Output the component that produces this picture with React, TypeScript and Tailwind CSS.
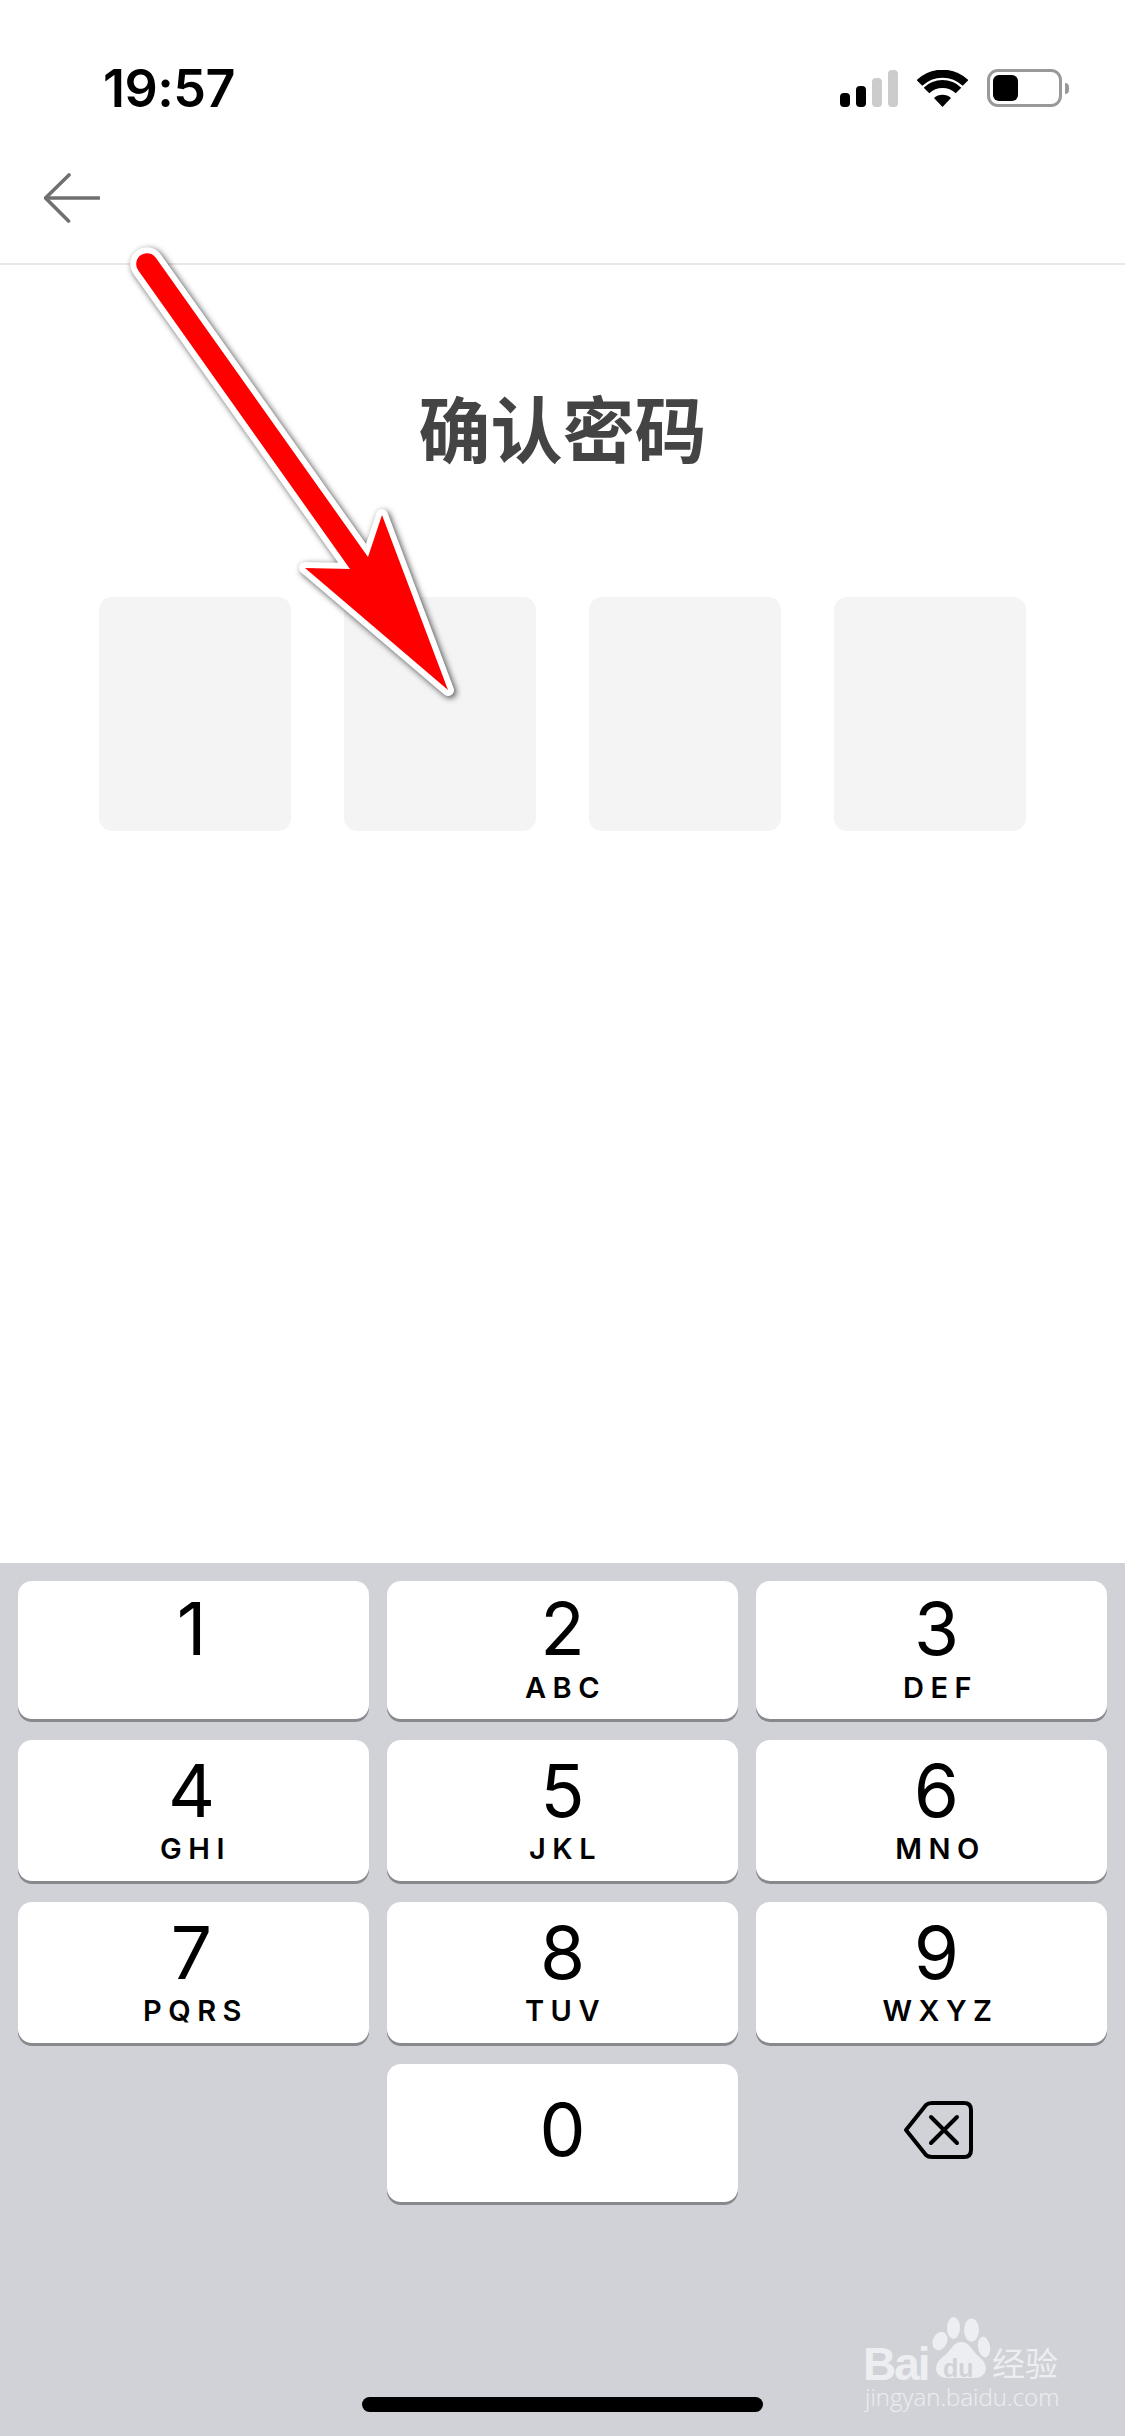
const FONT = "font-['Inter','Noto_Sans_CJK_SC',sans-serif]";

type K = { d: string; l: string; h: string; pt: string; dx: string; lx: string; gap: string };

const LEFT = { dx: "-ml-[4px]", lx: "-ml-[2px]" };
const MID = { dx: "ml-0", lx: "ml-0" };
const RIGHT = { dx: "ml-[10px]", lx: "ml-[12px]" };

const rowA = { h: "h-[138px]", pt: "pt-[16px]", gap: "mt-[15px]" };
const rowB = { h: "h-[141px]", pt: "pt-[19px]", gap: "mt-[14px]" };

const keys: K[] = [
  { d: "1", l: "", ...rowA, ...LEFT },
  { d: "2", l: "ABC", ...rowA, ...MID },
  { d: "3", l: "DEF", ...rowA, ...RIGHT },
  { d: "4", l: "GHI", ...rowB, ...LEFT },
  { d: "5", l: "JKL", ...rowB, ...MID },
  { d: "6", l: "MNO", ...rowB, ...RIGHT },
  { d: "7", l: "PQRS", ...rowB, ...LEFT },
  { d: "8", l: "TUV", ...rowB, ...MID },
  { d: "9", l: "WXYZ", ...rowB, ...RIGHT },
];

function Key({ d, l, h, pt, dx, lx, gap }: K) {
  return (
    <div className={`${h} ${pt} bg-white rounded-[14px] shadow-[0_3px_0_#88898d] flex flex-col items-center text-black`}>
      <span className={`${dx} text-[73px] leading-[64px] font-normal`}>{d}</span>
      {l && <span className={`${gap} ${lx} text-[29px] leading-[24px] font-semibold tracking-[6.5px] pl-[6px]`}>{l}</span>}
    </div>
  );
}

function StatusIcons() {
  return (
    <div className="flex items-end self-start">
      <div className="flex items-end gap-[6px]">
        <span className="w-[10px] h-[14px] rounded-[4px] bg-black" />
        <span className="w-[10px] h-[21px] rounded-[4px] bg-black" />
        <span className="w-[10px] h-[29px] rounded-[4px] bg-[#cccccc]" />
        <span className="w-[10px] h-[37px] rounded-[4px] bg-[#cccccc]" />
      </div>
      <svg className="ml-[19px]" width="51" height="37" viewBox="0 0 51 37" fill="none">
        <path d="M25.5 37 L17 28 A13 13 0 0 1 34 28 Z" fill="#000" />
        <path d="M9.5 20.5 A23 23 0 0 1 41.5 20.5" stroke="#000" strokeWidth="8" />
        <path d="M2.5 13 A33 33 0 0 1 48.5 13" stroke="#000" strokeWidth="8" />
      </svg>
      <div className="ml-[19px] relative w-[75px] h-[38px] rounded-[11px] border-[3px] border-[#999999] p-[3px]">
        <div className="w-[25px] h-full rounded-[6px] bg-black" />
        <span className="absolute left-[75px] top-[11px] w-[4px] h-[11px] rounded-r-[4px] bg-[#999999]" />
      </div>
    </div>
  );
}

function Arrow() {
  return (
    <svg className="absolute left-0 top-0 pointer-events-none drop-shadow-[2px_2px_3px_rgba(0,0,0,0.7)]" width="520" height="720" viewBox="0 0 520 720" fill="none">
      <path
        d="M138 270 L350 569 L305 568 L448 690 L382 515 L368 557 L156 258 A10.7 10.7 0 0 0 138 270 Z"
        fill="#ff0000"
        stroke="#ffffff"
        strokeWidth="12"
        strokeLinejoin="round"
        paintOrder="stroke"
      />
    </svg>
  );
}

function Watermark() {
  return (
    <div className="absolute left-[865px] top-[2316px] w-[200px] h-[98px] text-[#eceef1]">
      <svg className="absolute left-[67px] top-0" width="60" height="64" viewBox="0 0 60 64" fill="#eceef1">
        <ellipse cx="21.5" cy="12" rx="6.5" ry="11" />
        <ellipse cx="39.5" cy="14" rx="7.5" ry="11.5" />
        <ellipse cx="8" cy="25" rx="7" ry="9.5" transform="rotate(25 8 25)" />
        <ellipse cx="52" cy="31" rx="6" ry="10.5" transform="rotate(-10 52 31)" />
        <path d="M29 26 C37 26 40 34 46 40 C58 48 56 62 42 62 C34 62 24 62 16 62 C2 62 0 48 12 40 C19 35 21 26 29 26 Z" />
      </svg>
      <span className="absolute left-[-2px] top-[25px] text-[46px] leading-[46px] font-['Liberation_Sans',sans-serif] font-bold tracking-[-2px]">Bai</span>
      <span className="absolute left-[78px] top-[39px] text-[25px] leading-[26px] font-['Liberation_Sans',sans-serif] font-bold text-[#d1d2d8]">du</span>
      <span className="absolute left-[127px] top-[24px] text-[33px] leading-[44px] font-['Noto_Sans_CJK_SC',sans-serif] whitespace-nowrap">经验</span>
      <span className="absolute left-0 top-[66px] text-[24px] leading-[30px] font-['Open_Sans',sans-serif] font-light whitespace-nowrap">jingyan.baidu.com</span>
    </div>
  );
}

export default function App() {
  return (
    <div className={`relative w-[1125px] h-[2436px] bg-white overflow-hidden flex flex-col ${FONT}`}>
      {/* status bar */}
      <div className="h-[127px] flex justify-between pl-[103px] pr-[63px] pt-[69px] shrink-0">
        <span className="text-[52px] leading-[40px] font-semibold text-black tracking-[-0.5px]">19:57</span>
        <StatusIcons />
      </div>
      {/* navbar */}
      <div className="h-[138px] shrink-0 border-b-[2px] border-[#e8e8e8] pl-[44px] flex items-start pt-[46px]">
        <svg width="56" height="50" viewBox="0 0 56 50" fill="none" stroke="#707070" strokeWidth="3.6" strokeLinecap="round" strokeLinejoin="round">
          <path d="M55 25 H2" />
          <path d="M25 2 L1.5 25 L24.5 48" />
        </svg>
      </div>
      {/* body */}
      <div className="flex-1 flex flex-col items-center">
        <h1 className="mt-[130px] text-[72px] leading-[72px] font-bold text-[#444444]">确认密码</h1>
        <div className="mt-[130px] flex gap-[53px]">
          <div className="w-[192px] h-[234px] rounded-[13px] bg-[#f4f4f4]" />
          <div className="w-[192px] h-[234px] rounded-[13px] bg-[#f4f4f4]" />
          <div className="w-[192px] h-[234px] rounded-[13px] bg-[#f4f4f4]" />
          <div className="w-[192px] h-[234px] rounded-[13px] bg-[#f4f4f4]" />
        </div>
      </div>
      {/* keyboard */}
      <div className="h-[873px] shrink-0 bg-[#d1d2d8] pt-[18px] px-[18px]">
        <div className="grid grid-cols-3 gap-x-[18px] gap-y-[21px]">
          {keys.map((k) => (
            <Key key={k.d} {...k} />
          ))}
          <div />
          <div className="h-[138px] bg-white rounded-[14px] shadow-[0_3px_0_#88898d] flex items-center justify-center text-black">
            <span className="text-[73px] leading-[64px] font-normal -mt-[6px]">0</span>
          </div>
          <div className="flex items-start justify-center pt-[37px] pl-[12px]">
            <svg width="70" height="58" viewBox="0 0 70 58" fill="none" stroke="#000" strokeWidth="4" strokeLinecap="round" strokeLinejoin="round">
              <path d="M3 29 L23 4 Q25 2 29 2 H61 Q68 2 68 9 V49 Q68 56 61 56 H29 Q25 56 23 54 Z" />
              <path d="M28 16 L54 42 M54 16 L28 42" />
            </svg>
          </div>
        </div>
      </div>
      {/* home indicator */}
      <div className="absolute left-[362px] top-[2397px] w-[401px] h-[15px] rounded-full bg-black" />
      <Arrow />
      <Watermark />
    </div>
  );
}
